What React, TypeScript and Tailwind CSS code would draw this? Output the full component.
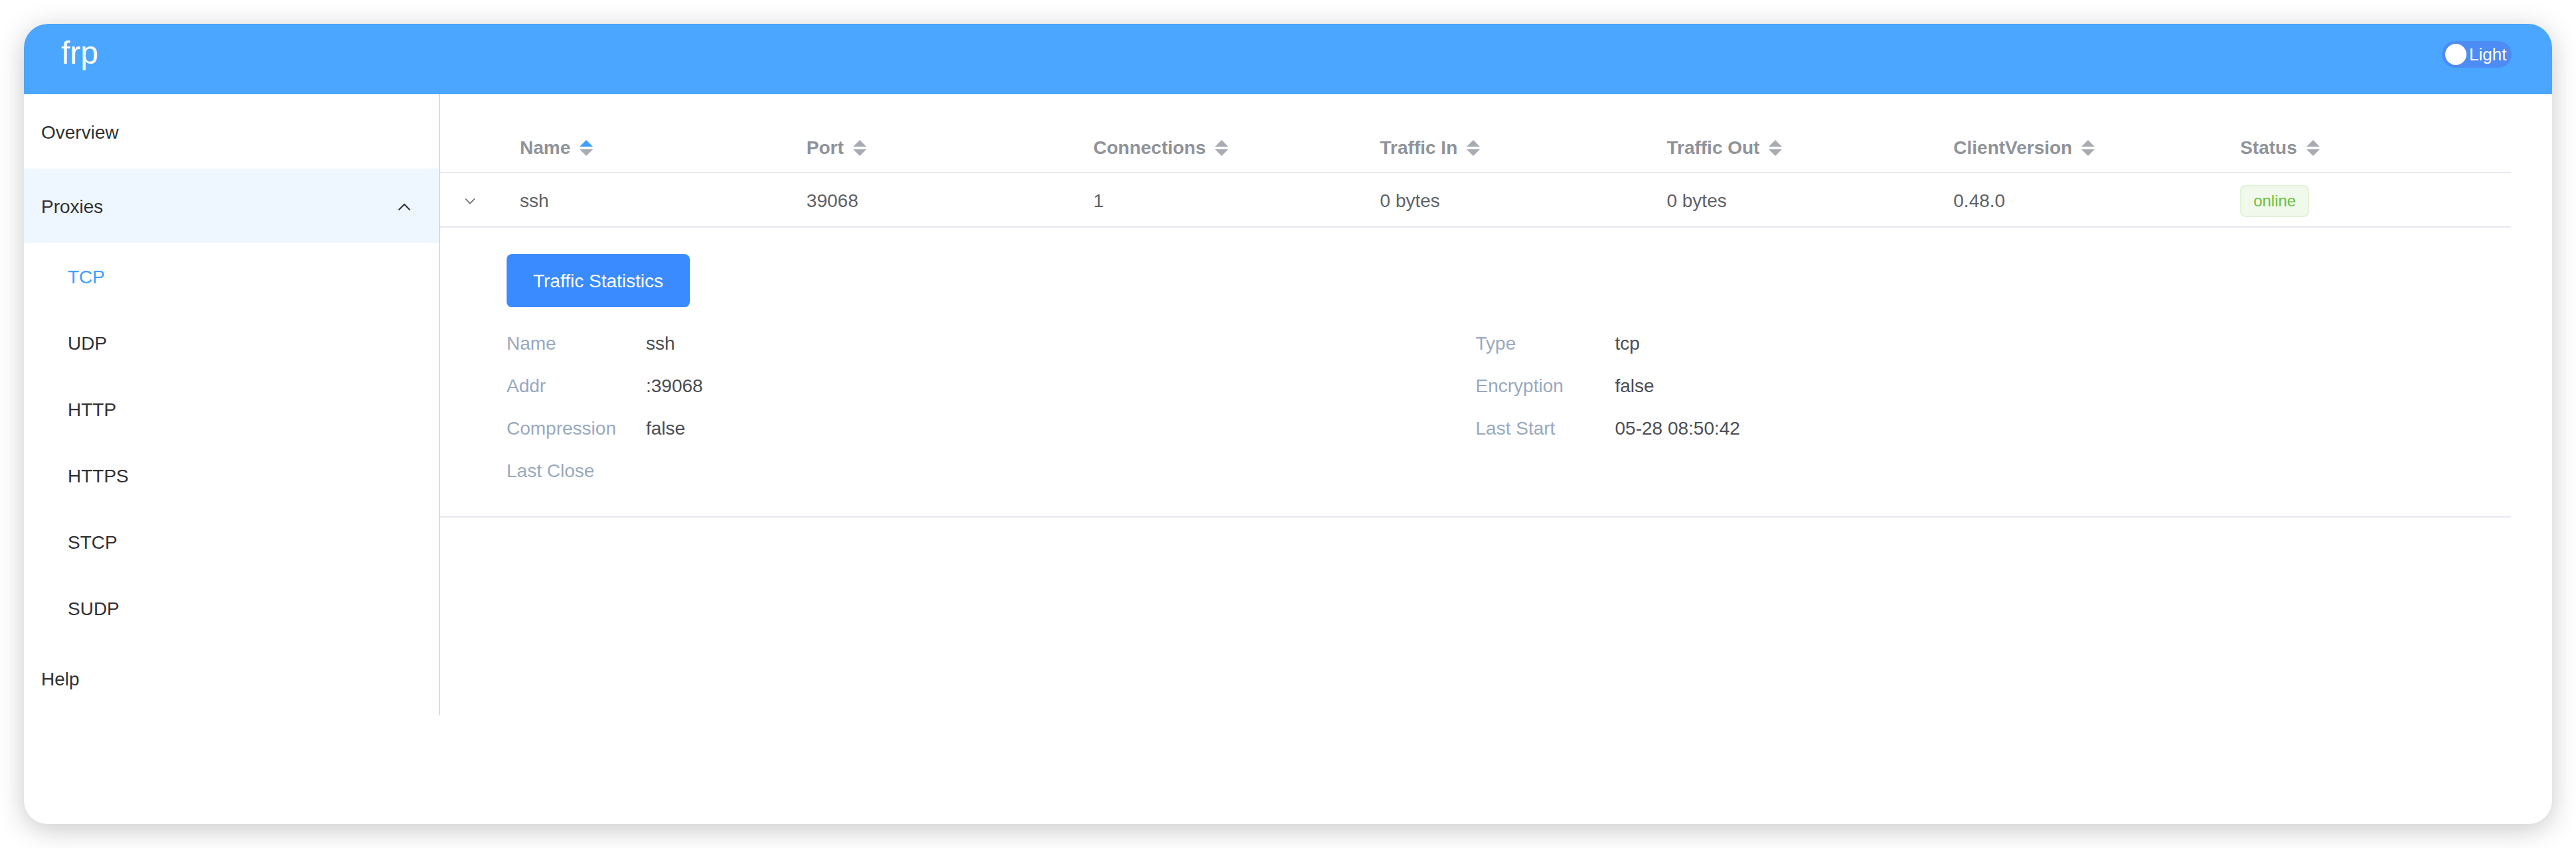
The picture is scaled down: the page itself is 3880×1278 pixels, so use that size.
import type { ReactNode } from "react";

const columns = [
  { label: "Name", active: true },
  { label: "Port" },
  { label: "Connections" },
  { label: "Traffic In" },
  { label: "Traffic Out" },
  { label: "ClientVersion" },
  { label: "Status" },
];

const details = [
  { label: "Name", value: "ssh" },
  { label: "Type", value: "tcp" },
  { label: "Addr", value: ":39068" },
  { label: "Encryption", value: "false" },
  { label: "Compression", value: "false" },
  { label: "Last Start", value: "05-28 08:50:42" },
  { label: "Last Close", value: "" },
];

const proxyTypes = ["TCP", "UDP", "HTTP", "HTTPS", "STCP", "SUDP"];

export default function App() {
  return (
    <div className="h-[1278px] w-[3880px] bg-white p-[36px] [font-family:'Liberation_Sans',Arial,sans-serif]">
      <div className="flex h-[1206px] flex-col overflow-hidden rounded-[36px] bg-white shadow-[0_8px_40px_rgba(0,0,0,0.22)]">
        <header className="flex h-[106px] shrink-0 items-start justify-between bg-[#4aa6fe] pl-[56px] pr-[61px]">
          <span className="pt-[20px] text-[48px] leading-[48px] text-white">frp</span>
          <ThemeSwitch />
        </header>

        <div className="flex flex-1 items-start">
          <Sidebar />

          <main className="min-w-0 flex-1 pr-[62px] pt-[39px]">
            <div className="grid h-[80px] grid-cols-[96px_repeat(7,minmax(0,1fr))] items-center border-b-2 border-[#e6e9f0] pt-[5px]">
              <div />
              {columns.map((column) => (
                <div className="flex items-center gap-[14px] pl-[24px]" key={column.label}>
                  <span className="text-[28px] font-bold text-[#909399]">{column.label}</span>
                  <SortCaret active={column.active} />
                </div>
              ))}
            </div>

            <div className="grid h-[82px] grid-cols-[96px_repeat(7,minmax(0,1fr))] items-center border-b-2 border-[#e6e9f0] pt-[4px] text-[28px] text-[#606266]">
              <div className="flex justify-center pr-[6px]">
                <ChevronDown />
              </div>
              <Cell>ssh</Cell>
              <Cell>39068</Cell>
              <Cell>1</Cell>
              <Cell>0 bytes</Cell>
              <Cell>0 bytes</Cell>
              <Cell>0.48.0</Cell>
              <Cell>
                <span className="inline-flex h-[48px] items-center rounded-[8px] border-2 border-[#e1f3d8] bg-[#f0f9eb] px-[18px] text-[24px] text-[#67c23a]">
                  online
                </span>
              </Cell>
            </div>

            <div className="border-b-2 border-[#e6e9f0] px-[100px] pb-[38px] pt-[40px]">
              <button
                className="h-[80px] w-[276px] rounded-[8px] bg-[#3a8bff] pt-[2px] text-[28px] text-white"
                type="button"
              >
                Traffic Statistics
              </button>
              <div className="mt-[21px] grid grid-cols-2">
                {details.map((item) => (
                  <div className="flex h-[64px] items-center pt-[3px] text-[28px]" key={item.label}>
                    <span className="w-[210px] shrink-0 text-[#99a9bf]">{item.label}</span>
                    <span className="text-[#4b4d52]">{item.value}</span>
                  </div>
                ))}
              </div>
            </div>
          </main>
        </div>
      </div>
    </div>
  );
}

function Sidebar() {
  return (
    <nav className="w-[627px] shrink-0 border-r-2 border-[#d8dbe6] text-[28px] text-[#303133]">
      <div className="flex h-[112px] items-center pl-[26px] pt-[4px]">Overview</div>
      <div className="flex h-[112px] items-center justify-between bg-[#eef6ff] pl-[26px] pr-[40px] pt-[4px]">
        <span>Proxies</span>
        <ChevronUp />
      </div>
      {proxyTypes.map((type) => (
        <div
          className={`flex h-[100px] items-center pl-[66px] pt-[4px] ${
            type === "TCP" ? "text-[#409eff]" : ""
          }`}
          key={type}
        >
          {type}
        </div>
      ))}
      <div className="flex h-[112px] items-center pl-[26px] pt-[4px]">Help</div>
    </nav>
  );
}

function ThemeSwitch() {
  return (
    <div className="mt-[26px] flex h-[40px] w-[105px] items-center gap-[4px] rounded-full bg-[#4d8cf5] pl-[5px]">
      <span className="size-[32px] rounded-full bg-white" />
      <span className="text-[26px] leading-none text-white">Light</span>
    </div>
  );
}

function Cell({ children }: { children: ReactNode }) {
  return <div className="pl-[24px]">{children}</div>;
}

function SortCaret({ active = false }: { active?: boolean }) {
  return (
    <svg aria-hidden="true" height="24" viewBox="0 0 20 24" width="20">
      <polygon fill={active ? "#409eff" : "#a8abb2"} points="10,0 20,10 0,10" />
      <polygon fill="#a8abb2" points="0,14 20,14 10,24" />
    </svg>
  );
}

function ChevronUp() {
  return (
    <svg aria-hidden="true" fill="none" height="24" stroke="#303133" strokeWidth="2" viewBox="0 0 24 24" width="24">
      <path d="M3.5 16.5 12 8l8.5 8.5" />
    </svg>
  );
}

function ChevronDown() {
  return (
    <svg aria-hidden="true" fill="none" height="20" stroke="#606266" strokeWidth="1.6" viewBox="0 0 20 20" width="20">
      <path d="M3 6.5 10 13.5l7-7" />
    </svg>
  );
}
